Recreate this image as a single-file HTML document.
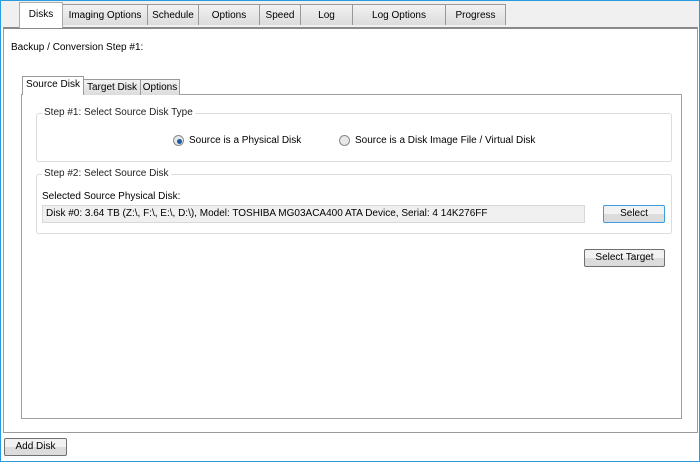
<!DOCTYPE html>
<html><head><style>
*{margin:0;padding:0;box-sizing:border-box}
body{width:700px;height:462px;position:relative;background:#fff;font-family:"Liberation Sans",sans-serif;font-size:10px;color:#000;overflow:hidden}
.a{position:absolute}
.frame{left:0;top:0;width:700px;height:462px;border:1px solid #2a9be0;z-index:5}
.tab{position:absolute;top:4px;height:21px;border:1px solid #999;border-bottom:none;background:linear-gradient(#f2f2f2,#dcdcdc);text-align:center;line-height:21px}
.tab.sel{top:2px;height:26px;background:#fff;z-index:2;border-color:#aaa;line-height:23px}
.itab{position:absolute;top:79px;height:16px;border:1px solid #999;border-bottom:none;background:linear-gradient(#f2f2f2,#dcdcdc);text-align:center;line-height:15px}
.itab.sel{top:76px;height:19px;background:#fff;z-index:2}
.grp{position:absolute;border:1px solid #dcdcdc;border-radius:3px}
.gt{position:absolute;top:-7px;left:5px;background:#fff;padding:0 2px;color:#222}
.btn{position:absolute;border:1px solid #707070;border-radius:2px;background:linear-gradient(#f2f2f2 50%,#dcdcdc 50%);text-align:center;line-height:16px}
.radio{position:absolute;width:11px;height:11px;border-radius:50%;border:1px solid #8a8a8a;background:#e8e8e8}
</style></head><body>
<div class="a frame"></div>
<div class="a" style="left:0;top:0;width:700px;height:28px;background:#f0f0f0"></div>
<div class="a" style="left:3px;top:27px;width:695px;height:406px;background:#fff;border:1px solid #9a9a9a;border-top:2px solid #8a8a8a"></div>
<div class="tab sel" style="left:19px;width:44px">Disks</div>
<div class="tab" style="left:62px;width:86px">Imaging Options</div>
<div class="tab" style="left:147px;width:52px">Schedule</div>
<div class="tab" style="left:198px;width:62px">Options</div>
<div class="tab" style="left:259px;width:42px">Speed</div>
<div class="tab" style="left:300px;width:53px">Log</div>
<div class="tab" style="left:352px;width:94px">Log Options</div>
<div class="tab" style="left:445px;width:61px">Progress</div>
<div class="a" style="left:11px;top:42px">Backup / Conversion Step #1:</div>
<div class="a" style="left:21px;top:94px;width:661px;height:325px;border:1px solid #a0a0a0;background:#fff"></div>
<div class="itab sel" style="left:22px;width:62px">Source Disk</div>
<div class="itab" style="left:83px;width:58px">Target Disk</div>
<div class="itab" style="left:140px;width:40px">Options</div>
<div class="grp" style="left:36px;top:113px;width:636px;height:49px"><span class="gt">Step #1: Select Source Disk Type</span></div>
<div class="radio" style="left:173px;top:135px"><div class="a" style="left:3px;top:3px;width:5px;height:5px;border-radius:50%;background:#1c5aa8"></div></div>
<div class="a" style="left:189px;top:135px">Source is a Physical Disk</div>
<div class="radio" style="left:339px;top:135px"></div>
<div class="a" style="left:355px;top:135px">Source is a Disk Image File / Virtual Disk</div>
<div class="grp" style="left:36px;top:174px;width:636px;height:60px"><span class="gt">Step #2: Select Source Disk</span></div>
<div class="a" style="left:42px;top:191px">Selected Source Physical Disk:</div>
<div class="a" style="left:42px;top:205px;width:543px;height:18px;border:1px solid #d8d8d8;background:#f0f0f0;padding-left:3px;line-height:16px">Disk #0: 3.64 TB (Z:\, F:\, E:\, D:\), Model: TOSHIBA MG03ACA400 ATA Device, Serial: 4 14K276FF</div>
<div class="btn" style="left:603px;top:205px;width:62px;height:18px;border-color:#3c9ee0">Select</div>
<div class="btn" style="left:584px;top:249px;width:81px;height:18px">Select Target</div>
<div class="btn" style="left:4px;top:438px;width:63px;height:18px">Add Disk</div>
</body></html>
